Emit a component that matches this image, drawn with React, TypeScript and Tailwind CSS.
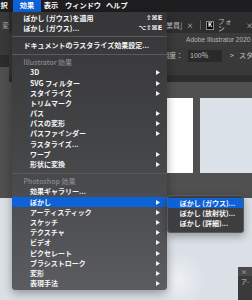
import React from "react";

type Item = {
  label?: string;
  sub?: boolean;
  indent?: boolean;
  header?: boolean;
  sep?: boolean;
  shortcut?: string;
  active?: boolean;
};

const items: Item[] = [
  { label: "ぼかし (ガウス)を適用", shortcut: "⇧⌘E" },
  { label: "ぼかし (ガウス)...", shortcut: "⌥⇧⌘E" },
  { sep: true },
  { label: "ドキュメントのラスタライズ効果設定..." },
  { sep: true },
  { label: "Illustrator 効果", header: true },
  { label: "3D", indent: true, sub: true },
  { label: "SVG フィルター", indent: true, sub: true },
  { label: "スタイライズ", indent: true, sub: true },
  { label: "トリムマーク", indent: true },
  { label: "パス", indent: true, sub: true },
  { label: "パスの変形", indent: true, sub: true },
  { label: "パスファインダー", indent: true, sub: true },
  { label: "ラスタライズ...", indent: true },
  { label: "ワープ", indent: true, sub: true },
  { label: "形状に変換", indent: true, sub: true },
  { sep: true },
  { label: "Photoshop 効果", header: true },
  { label: "効果ギャラリー...", indent: true },
  { label: "ぼかし", indent: true, sub: true, active: true },
  { label: "アーティスティック", indent: true, sub: true },
  { label: "スケッチ", indent: true, sub: true },
  { label: "テクスチャ", indent: true, sub: true },
  { label: "ビデオ", indent: true, sub: true },
  { label: "ピクセレート", indent: true, sub: true },
  { label: "ブラシストローク", indent: true, sub: true },
  { label: "変形", indent: true, sub: true },
  { label: "表現手法", indent: true, sub: true },
];

function Arrow() {
  return (
    <svg width="4" height="5" viewBox="0 0 4 5" className="shrink-0">
      <path d="M0 0 L4 2.5 L0 5 Z" fill="#f2f2f2" />
    </svg>
  );
}

function MenuRow({ item }: { item: Item }) {
  if (item.sep) {
    return (
      <div className="h-[7px] flex items-center">
        <div className="h-px w-full bg-[#5b5b5d]" />
      </div>
    );
  }
  return (
    <div
      className={`h-[10.2px] flex items-center justify-between pr-[7px] ${
        item.indent ? "pl-[18px]" : "pl-[11.5px]"
      } ${item.active ? "bg-[#0e62d8]" : ""} ${
        item.header ? "text-[#88898b] font-medium" : "text-[#f6f6f6] font-bold"
      }`}
    >
      <span className="whitespace-nowrap">{item.label}</span>
      {item.sub && <Arrow />}
      {item.shortcut && (
        <span className="whitespace-nowrap -mr-[2.5px] font-['DejaVu_Sans',sans-serif] font-bold text-[6.6px]">
          {item.shortcut}
        </span>
      )}
    </div>
  );
}

export default function App() {
  return (
    <div className="relative w-[252px] h-[300px] overflow-hidden bg-[radial-gradient(circle_at_178px_280px,#edf0f4_0px,#dbe0e7_28px)] font-['Noto_Sans_CJK_JP','Noto_Sans',sans-serif] text-[7px] leading-none">
      {/* menu bar */}
      <div className="h-[12px] bg-[#1e1e20] flex items-center text-[7.2px] text-white font-bold">
        <span className="w-[13.3px] pl-[0.5px]">択</span>
        <div className="w-[27.4px] h-full bg-[#0e62d8] flex items-center justify-center">効果</div>
        <span className="ml-[3px]">表示</span>
        <span className="ml-[7px]">ウィンドウ</span>
        <span className="ml-[5px]">ヘルプ</span>
      </div>

      {/* app window behind */}
      <div className="flex h-[186px]">
        <div className="w-[12px] flex flex-col">
          <div className="h-[43px] bg-[#393939] pt-[10px] pl-[2px] text-[#a9a9a9]">変</div>
          <div className="h-[12px] bg-[#2c2c2c]" />
          <div className="flex-1 bg-[#4f4f4f]" />
        </div>
        <div className="flex-1 flex flex-col">
          <div className="h-[21px] bg-[#2e2e2e] flex items-center text-[#bdbdbd] pt-[5px]">
            <div className="w-[180px] flex justify-end">従業員]</div>
            <span className="ml-[4px] text-[#cfcfcf]">×</span>
            <div className="ml-[7px] w-px h-[10px] bg-[#555]" />
            <div className="ml-[5px] w-[7.5px] h-[9px] bg-black border border-[#888] flex items-center justify-center text-[6px] text-white font-bold">
              K
            </div>
            <span className="ml-[4px]">フォン</span>
            <span className="ml-[8px] text-[#cfcfcf]">×</span>
          </div>
          <div className="h-[14px] bg-[#3b3b3b] flex items-center pl-[177px] text-[#b5b5b5] font-['Liberation_Sans',sans-serif] text-[6.6px] whitespace-nowrap">
            Adobe Illustrator 2020
          </div>
          <div className="h-[17px] bg-[#393939] flex items-center text-[#c8c8c8] whitespace-nowrap">
            <div className="w-[174px] flex justify-end">不透明度：</div>
            <div className="ml-[5px] w-[34px] h-[12px] bg-[#2a2a2a] flex items-center pl-[2px]">100%</div>
            <span className="ml-[8px]">&gt;</span>
            <span className="ml-[5px]">スタ</span>
          </div>
          <div className="h-[11px] bg-[#383838]" />
          <div className="h-[7px] bg-[#2d2d2d]" />
          <div className="flex-1 bg-[#505050] pt-[16px]">
            <div className="flex h-[75px]">
              <div className="ml-[156px] w-[28px] bg-white" />
              <div className="ml-[7px] flex-1 bg-[#dce2ea]" />
            </div>
          </div>
        </div>
      </div>

      {/* small panel bottom right */}
      <div className="absolute left-[238px] top-[267px] w-[20px] h-[40px] bg-[#3a3a3a] text-[#c8c8c8] text-[6px]">
        <div className="h-[9px] bg-[#4a4a4a] flex items-center pl-[3px]">×</div>
        <div className="pl-[3px] pt-[3px]">ア-</div>
      </div>

      {/* main menu */}
      <div className="absolute left-[12px] top-[12px] w-[154.7px] pt-[1px] pb-[1.8px] rounded-b-[3px] bg-gradient-to-b from-[#363638] via-[#444547] to-[#5b5c60] shadow-[0_3px_10px_rgba(0,0,0,0.35)]">
        {items.map((it, i) => (
          <MenuRow key={i} item={it} />
        ))}
      </div>

      {/* submenu */}
      <div className="absolute left-[166.7px] top-[195px] w-[77.5px] pt-[2px] pb-[3px] rounded-[3px] bg-[#3e3e40] border border-[#5a5a5c] shadow-[0_3px_8px_rgba(0,0,0,0.35)] text-[#f6f6f6] font-bold">
        <div className="h-[10.2px] bg-[#0e62d8] flex items-center pl-[12px] whitespace-nowrap">ぼかし (ガウス)...</div>
        <div className="h-[10.2px] flex items-center pl-[12px] whitespace-nowrap">ぼかし (放射状)...</div>
        <div className="h-[10.2px] flex items-center pl-[12px] whitespace-nowrap">ぼかし (詳細)...</div>
      </div>
    </div>
  );
}
